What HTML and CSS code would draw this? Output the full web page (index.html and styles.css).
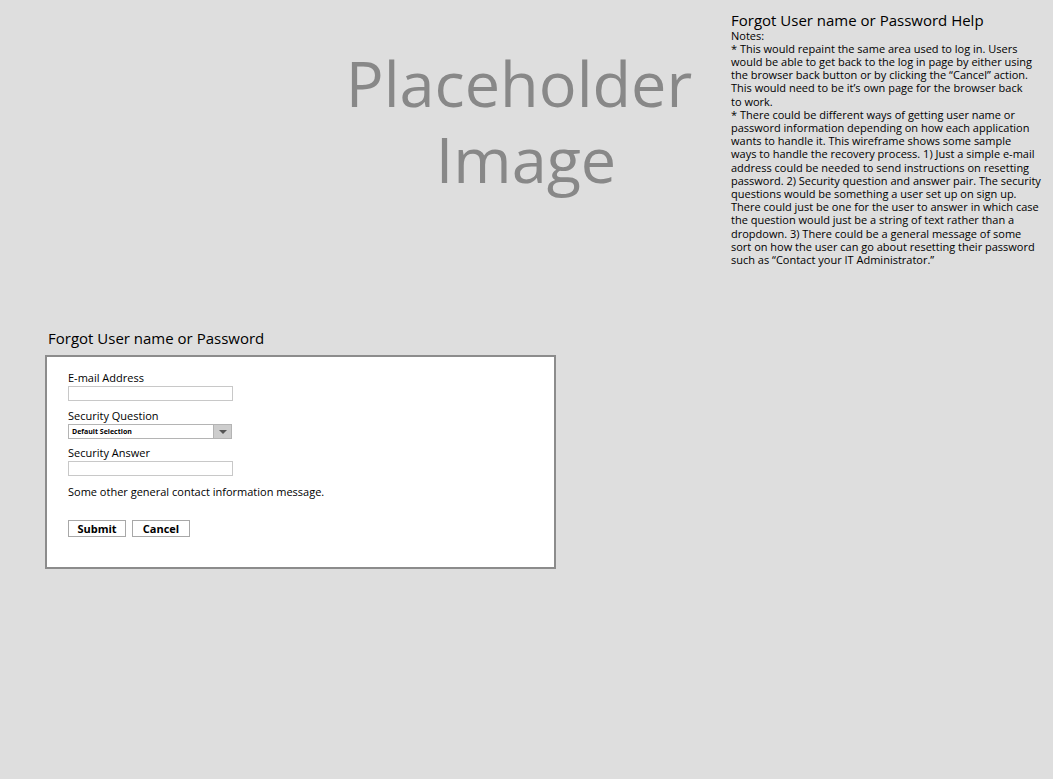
FILE: index.html
```html
<!DOCTYPE html>
<html>
<head>
<meta charset="utf-8">
<link rel="stylesheet" href="styles.css">
</head>
<body>
<div class="canvas">
  <div class="top">
    <div class="placeholder"><span class="ph-line">Placeholder</span><span class="ph-line ph-image">Image</span></div>
    <div class="notes">
      <h2 class="notes-title">Forgot User name or Password Help</h2>
      <div class="notes-body">
        <span>Notes:</span>
        <span>* This would repaint the same area used to log in. Users</span>
        <span>would be able to get back to the log in page by either using</span>
        <span>the browser back button or by clicking the “Cancel” action.</span>
        <span>This would need to be it’s own page for the browser back</span>
        <span>to work.</span>
        <span>* There could be different ways of getting user name or</span>
        <span>password information depending on how each application</span>
        <span>wants to handle it. This wireframe shows some sample</span>
        <span>ways to handle the recovery process. 1) Just a simple e-mail</span>
        <span>address could be needed to send instructions on resetting</span>
        <span>password. 2) Security question and answer pair. The security</span>
        <span>questions would be something a user set up on sign up.</span>
        <span>There could just be one for the user to answer in which case</span>
        <span>the question would just be a string of text rather than a</span>
        <span>dropdown. 3) There could be a general message of some</span>
        <span>sort on how the user can go about resetting their password</span>
        <span>such as “Contact your IT Administrator.”</span>
      </div>
    </div>
  </div>
  <section class="forgot">
    <h1 class="forgot-title">Forgot User name or Password</h1>
    <div class="box">
      <div class="label l-email">E-mail Address</div>
      <div class="input i-email"></div>
      <div class="label l-question">Security Question</div>
      <div class="select">
        <span class="select-text">Default Selection</span>
        <span class="select-btn"><span class="tri"></span></span>
      </div>
      <div class="label l-answer">Security Answer</div>
      <div class="input i-answer"></div>
      <div class="message">Some other general contact information message.</div>
      <div class="buttons">
        <span class="btn btn-submit">Submit</span>
        <span class="btn btn-cancel">Cancel</span>
      </div>
    </div>
  </section>
</div>
</body>
</html>
```
FILE: styles.css
```css
html, body {
  margin: 0;
  padding: 0;
  background: #ffffff;
}
body {
  font-family: "Open Sans", "DejaVu Sans", sans-serif;
  color: #000;
}
.canvas {
  width: 1053px;
  height: 779px;
  background: #dedede;
  overflow: hidden;
}
.top {
  display: flex;
  height: 329px;
  box-sizing: border-box;
}
.placeholder {
  margin-left: 340px;
  width: 358px;
  margin-top: 45px;
  text-align: center;
  font-size: 63px;
  line-height: 76px;
  color: #888888;
  white-space: nowrap;
}
.ph-line {
  display: block;
}
.ph-image {
  padding-left: 14px;
}
.notes {
  margin-left: 33px;
  margin-top: 12px;
  width: 320px;
}
.notes-title {
  margin: 0;
  font-size: 15px;
  font-weight: normal;
  line-height: 16.5px;
  white-space: nowrap;
}
.notes-body {
  font-size: 11px;
  line-height: 13.2px;
}
.notes-body span {
  display: block;
  white-space: nowrap;
}
.forgot {
  margin-left: 45px;
  width: 510px;
}
.forgot-title {
  margin: 0 0 8px 3px;
  font-size: 15px;
  font-weight: normal;
  line-height: 18px;
  white-space: nowrap;
}
.box {
  box-sizing: border-box;
  width: 511px;
  height: 214px;
  background: #ffffff;
  border: 2px solid #8c8c8c;
  padding: 14px 0 0 21px;
  font-size: 11px;
}
.label {
  line-height: 13px;
  height: 13px;
  white-space: nowrap;
}
.input {
  box-sizing: border-box;
  width: 165px;
  height: 15px;
  border: 1px solid #c8c8c8;
  background: #fff;
  margin-top: 2px;
}
.l-question { margin-top: 8px; }
.select {
  box-sizing: border-box;
  display: flex;
  width: 164px;
  height: 15px;
  margin-top: 2px;
  border: 1px solid #b4b4b4;
  background: #fff;
}
.select-text {
  flex: 1;
  font-size: 7px;
  font-weight: bold;
  line-height: 13px;
  padding-left: 3px;
  white-space: nowrap;
}
.select-btn {
  width: 17px;
  height: 13px;
  background: #cdcdcd;
  border-left: 1px solid #b4b4b4;
  display: flex;
  align-items: center;
  justify-content: center;
}
.tri {
  width: 0;
  height: 0;
  border-left: 4px solid transparent;
  border-right: 4px solid transparent;
  border-top: 4px solid #555;
}
.l-answer { margin-top: 7px; }
.i-answer { margin-top: 2px; }
.message {
  margin-top: 9px;
  line-height: 13px;
  white-space: nowrap;
}
.buttons {
  display: flex;
  gap: 6px;
  margin-top: 22px;
}
.btn {
  box-sizing: border-box;
  height: 17px;
  border: 1px solid #a8a8a8;
  background: #fff;
  font-weight: bold;
  font-size: 11px;
  line-height: 15px;
  text-align: center;
}
.btn-submit { width: 58px; }
.btn-cancel { width: 58px; }
```
